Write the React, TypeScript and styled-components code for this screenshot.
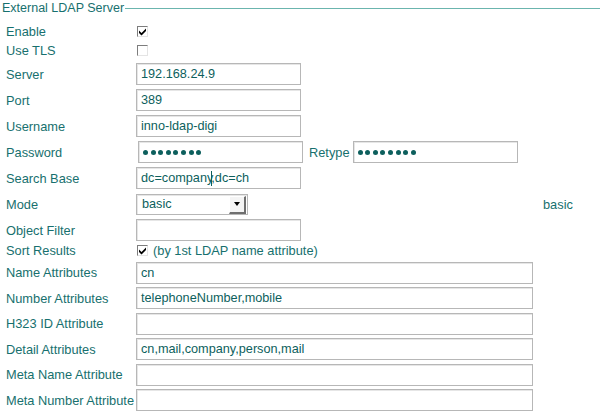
import React from "react";
import styled, { createGlobalStyle } from "styled-components";

const Global = createGlobalStyle`
  body {
    margin: 0;
    background: #ffffff;
    font-family: "Liberation Sans", Arial, sans-serif;
  }
`;

const Fieldset = styled.div`
  width: 600px;
  height: 418px;
  overflow: hidden;
`;

const LegendBar = styled.div`
  display: flex;
  align-items: center;
  height: 16px;
`;

const Legend = styled.span`
  font-size: 12.5px;
  line-height: 16px;
  color: #17706e;
  padding-left: 2px;
  padding-right: 1px;
  white-space: nowrap;
`;

const Rule = styled.div`
  flex: 1;
  border-top: 1px solid #6bb5ae;
  margin-top: 1px;
`;

const Form = styled.div`
  padding: 6px 0 0 6px;
`;

const Row = styled.div<{ $h: number; $pb?: number }>`
  display: grid;
  grid-template-columns: 130px auto;
  align-items: center;
  height: ${(p) => p.$h}px;
  padding-bottom: ${(p) => p.$pb ?? 0}px;
  box-sizing: border-box;
`;

const Label = styled.div`
  font-size: 12.8px;
  color: #17706e;
  white-space: nowrap;
`;

const Cell = styled.div<{ $shift?: number }>`
  display: flex;
  align-items: center;
  margin-left: ${(p) => p.$shift ?? 0}px;
`;

const Field = styled.div<{ $w: number }>`
  width: ${(p) => p.$w}px;
  height: 22px;
  box-sizing: border-box;
  border: 1px solid #b7b7b7;
  box-shadow: inset 1px 1px 0 #e6e6e6;
  padding: 0 4px;
  display: flex;
  align-items: center;
  font-size: 12.7px;
  color: #0d5f5d;
  white-space: nowrap;
  background: #fff;
`;

const Caret = styled.span`
  display: inline-block;
  width: 1px;
  height: 15px;
  background: #0d5f5d;
  margin: 0 -1px 0 -2px;
`;

const Dot = styled.span`
  display: inline-block;
  width: 5px;
  height: 5px;
  border-radius: 50%;
  background: #0d5f5d;
  margin-right: 2.6px;
`;

const Inline = styled.span<{ $l: number; $r: number }>`
  font-size: 12.8px;
  color: #17706e;
  margin: 0 ${(p) => p.$r}px 0 ${(p) => p.$l}px;
`;

const CheckBox = styled.span`
  display: inline-flex;
  align-items: center;
  justify-content: center;
  width: 11px;
  height: 11px;
  box-sizing: border-box;
  margin-left: 1px;
  border-top: 1px solid #7d7d7d;
  border-left: 1px solid #7d7d7d;
  border-right: 1px solid #e4e4e4;
  border-bottom: 1px solid #e4e4e4;
  background: #fff;
`;

const Select = styled.div`
  width: 112px;
  height: 21px;
  box-sizing: border-box;
  border: 1px solid #b7b7b7;
  box-shadow: inset 1px 1px 0 #e6e6e6;
  display: flex;
  align-items: stretch;
  font-size: 12.7px;
  color: #0d5f5d;
  background: #fff;
`;

const SelectText = styled.div`
  flex: 1;
  display: flex;
  align-items: center;
  padding-left: 5px;
`;

const SelectButton = styled.div`
  width: 17px;
  box-sizing: border-box;
  margin: 1px 1px 0 0;
  background: #f4f4f4;
  border-top: 1px solid #ffffff;
  border-left: 1px solid #ffffff;
  border-right: 2px solid #6f6f6f;
  border-bottom: 2px solid #6f6f6f;
  display: flex;
  align-items: center;
  justify-content: center;
`;

const Arrow = styled.span`
  width: 0;
  height: 0;
  border-left: 3.5px solid transparent;
  border-right: 3.5px solid transparent;
  border-top: 4px solid #000;
`;

const Note = styled.span<{ $left: number }>`
  font-size: 12.8px;
  color: #17706e;
  margin-left: ${(p) => p.$left}px;
`;

const Check = ({ checked }: { checked?: boolean }) => (
  <CheckBox>
    {checked && (
      <svg width="9" height="9" viewBox="0 0 9 9">
        <path d="M1 3.5 L3.5 6 L8 1.5 L8 4 L3.5 8.5 L1 6 Z" fill="#000" />
      </svg>
    )}
  </CheckBox>
);

const Dots = ({ n }: { n: number }) => (
  <>
    {Array.from({ length: n }).map((_, i) => (
      <Dot key={i} />
    ))}
  </>
);

const attrs: [string, string][] = [
  ["Name Attributes", "cn"],
  ["Number Attributes", "telephoneNumber,mobile"],
  ["H323 ID Attribute", ""],
  ["Detail Attributes", "cn,mail,company,person,mail"],
  ["Meta Name Attribute", ""],
  ["Meta Number Attribute", ""],
];

export default function App() {
  return (
    <Fieldset>
      <Global />
      <LegendBar>
        <Legend>External LDAP Server</Legend>
        <Rule />
      </LegendBar>
      <Form>
        <Row $h={19}>
          <Label>Enable</Label>
          <Cell><Check checked /></Cell>
        </Row>
        <Row $h={20} $pb={2}>
          <Label>Use TLS</Label>
          <Cell><Check /></Cell>
        </Row>
        <Row $h={26}>
          <Label>Server</Label>
          <Cell><Field $w={165}>192.168.24.9</Field></Cell>
        </Row>
        <Row $h={26}>
          <Label>Port</Label>
          <Cell><Field $w={165}>389</Field></Cell>
        </Row>
        <Row $h={26}>
          <Label>Username</Label>
          <Cell><Field $w={165}>inno-ldap-digi</Field></Cell>
        </Row>
        <Row $h={26}>
          <Label>Password</Label>
          <Cell $shift={2}>
            <Field $w={165}><Dots n={8} /></Field>
            <Inline $l={6} $r={3}>Retype</Inline>
            <Field $w={165}><Dots n={8} /></Field>
          </Cell>
        </Row>
        <Row $h={26}>
          <Label>Search Base</Label>
          <Cell><Field $w={165}>dc=company<Caret />,dc=ch</Field></Cell>
        </Row>
        <Row $h={26}>
          <Label>Mode</Label>
          <Cell>
            <Select>
              <SelectText>basic</SelectText>
              <SelectButton><Arrow /></SelectButton>
            </Select>
            <Note $left={295}>basic</Note>
          </Cell>
        </Row>
        <Row $h={26}>
          <Label>Object Filter</Label>
          <Cell><Field $w={165}></Field></Cell>
        </Row>
        <Row $h={17} $pb={2}>
          <Label>Sort Results</Label>
          <Cell>
            <Check checked />
            <Inline $l={5} $r={0}>(by 1st LDAP name attribute)</Inline>
          </Cell>
        </Row>
        {attrs.map(([label, value]) => (
          <Row $h={25.5} key={label}>
            <Label>{label}</Label>
            <Cell><Field $w={397}>{value}</Field></Cell>
          </Row>
        ))}
      </Form>
    </Fieldset>
  );
}
